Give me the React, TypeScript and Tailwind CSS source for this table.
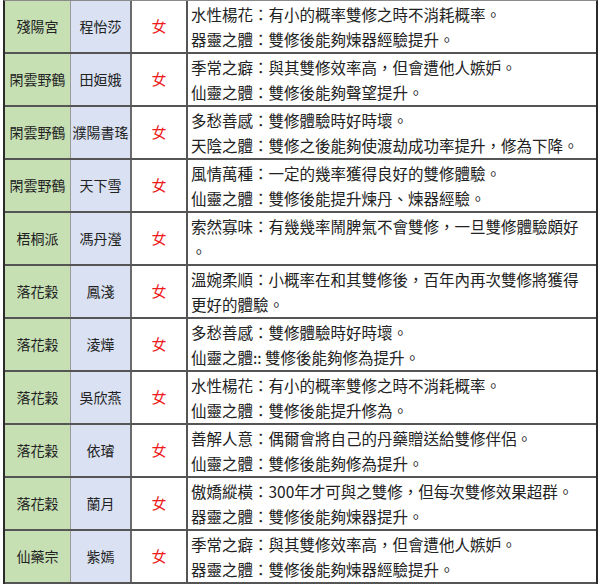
const rows: { sect: string; name: string; lines: string[] }[] = [
  { sect: "殘陽宮", name: "程怡莎", lines: ["水性楊花：有小的概率雙修之時不消耗概率。", "器靈之體：雙修後能夠煉器經驗提升。"] },
  { sect: "閑雲野鶴", name: "田姮娥", lines: ["季常之癖：與其雙修效率高，但會遭他人嫉妒。", "仙靈之體：雙修後能夠聲望提升。"] },
  { sect: "閑雲野鶴", name: "濮陽書瑤", lines: ["多愁善感：雙修體驗時好時壞。", "天陰之體：雙修之後能夠使渡劫成功率提升，修為下降。"] },
  { sect: "閑雲野鶴", name: "天下雪", lines: ["風情萬種：一定的幾率獲得良好的雙修體驗。", "仙靈之體：雙修後能提升煉丹、煉器經驗。"] },
  { sect: "梧桐派", name: "馮丹瀅", lines: ["索然寡味：有幾幾率鬧脾氣不會雙修，一旦雙修體驗頗好", "。"] },
  { sect: "落花穀", name: "鳳淺", lines: ["溫婉柔順：小概率在和其雙修後，百年內再次雙修將獲得", "更好的體驗。"] },
  { sect: "落花穀", name: "淩燁", lines: ["多愁善感：雙修體驗時好時壞。", "仙靈之體::  雙修後能夠修為提升。"] },
  { sect: "落花穀", name: "吳欣燕", lines: ["水性楊花：有小的概率雙修之時不消耗概率。", "仙靈之體：雙修後能提升修為。"] },
  { sect: "落花穀", name: "依璿", lines: ["善解人意：偶爾會將自己的丹藥贈送給雙修伴侶。", "仙靈之體：雙修後能夠修為提升。"] },
  { sect: "落花穀", name: "蘭月", lines: ["傲嬌縱橫：300年才可與之雙修，但每次雙修效果超群。", "器靈之體：雙修後能夠煉器提升。"] },
  { sect: "仙藥宗", name: "紫嫣", lines: ["季常之癖：與其雙修效率高，但會遭他人嫉妒。", "器靈之體：雙修後能夠煉器經驗提升。"] },
];

export default function App() {
  return (
    <div className="h-[587px] w-[601px] bg-white pl-[3px] font-['Noto_Sans_CJK_TC','Noto_Sans',sans-serif] text-[#222]">
      <div className="w-[595px] border-x-2 border-t border-x-[#2b2b2b] border-t-[#8a8a8a]">
        {rows.map((r, i) => (
          <div key={i} className="flex h-[53px] border-b-2 border-[#555]">
            <div className="flex w-[66px] items-center justify-center border-r border-[#9a9a9a] bg-[#c6e0b4] text-[14px]">
              {r.sect}
            </div>
            <div className="flex w-[61px] items-center justify-center border-r-2 border-[#6a6a6a] bg-[#d9e1f2] text-[14px]">
              {r.name}
            </div>
            <div className="flex w-[56px] items-center justify-center border-r-2 border-[#555] text-[15px] text-[#ee1c1c]">
              女
            </div>
            <div className="flex flex-1 flex-col justify-center pl-[3px] text-[15.5px] leading-[25px]">
              {r.lines.map((l, j) => (
                <div key={j} className="whitespace-nowrap">
                  {l}
                </div>
              ))}
            </div>
          </div>
        ))}
      </div>
    </div>
  );
}
